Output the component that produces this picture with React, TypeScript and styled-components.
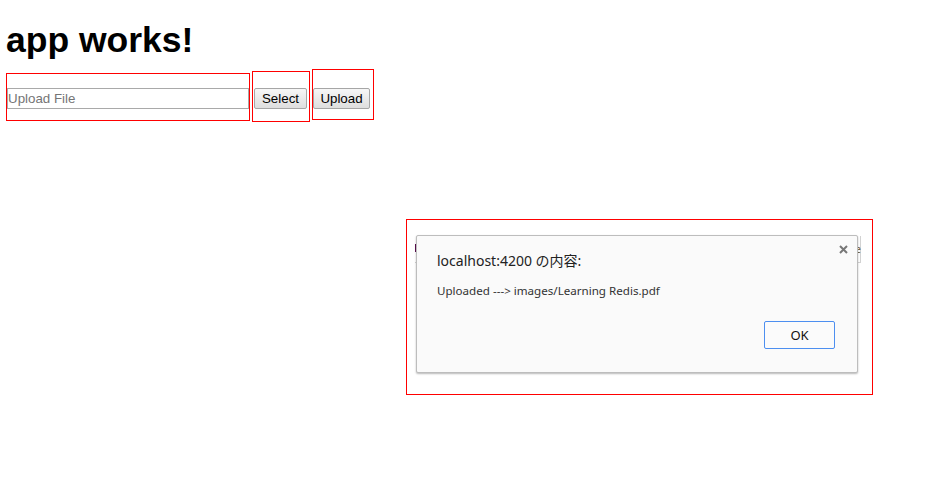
import React from "react";
import styled, { createGlobalStyle } from "styled-components";

const GlobalStyle = createGlobalStyle`
  html, body {
    margin: 0;
    padding: 0;
    background: #ffffff;
  }
  body {
    font-family: "Liberation Sans", Arial, sans-serif;
    color: #000;
  }
`;

const Page = styled.div`
  position: relative;
  width: 925px;
  height: 493px;
  padding-left: 6px;
  box-sizing: border-box;
  overflow: hidden;
`;

const Title = styled.h1`
  margin: 20px 0 9px 0;
  font-size: 35.5px;
  line-height: 40px;
  font-weight: bold;
`;

const Row = styled.div`
  display: flex;
  align-items: flex-start;
  gap: 2px;
`;

// the red debug outlines around each form control
const Frame = styled.div<{ $w: number; $h: number; $top: number; $padTop: number; $padLeft: number }>`
  box-sizing: border-box;
  width: ${(p) => p.$w}px;
  height: ${(p) => p.$h}px;
  margin-top: ${(p) => p.$top}px;
  padding-top: ${(p) => p.$padTop}px;
  padding-left: ${(p) => p.$padLeft}px;
  border: 1px solid #ff0000;
`;

const FileInput = styled.input`
  display: block;
  box-sizing: border-box;
  width: 242px;
  height: 21px;
  margin: 0;
  padding: 0 1px 0 0;
  border: 1px solid #a9a9a9;
  font-family: "Liberation Sans", Arial, sans-serif;
  font-size: 13.33px;
  color: #000;
  outline: none;

  &::placeholder {
    color: #757575;
  }
`;

const Button = styled.button<{ $w: number }>`
  display: block;
  box-sizing: border-box;
  width: ${(p) => p.$w}px;
  height: 21px;
  margin: 0;
  padding: 0;
  border: 1px solid #a6a6a6;
  border-radius: 2px;
  background: linear-gradient(#f7f7f7, #dedede);
  font-family: "Liberation Sans", Arial, sans-serif;
  font-size: 13.33px;
  line-height: 19px;
  color: #000;
`;

/* overlay: the browser alert, drawn over the page */
const AlertFrame = styled.div`
  position: absolute;
  left: 406px;
  top: 219px;
  width: 467px;
  height: 176px;
  box-sizing: border-box;
  border: 1px solid #ff0000;
  padding: 15px 0 0 9px;
`;

const Behind = styled.div`
  position: absolute;
  left: 8px;
  top: 16px;
  width: 446px;
  height: 27px;
  box-sizing: border-box;
  border-right: 1px solid #d2d2d2;
  border-bottom: 1px solid #d2d2d2;
  display: flex;
  justify-content: space-between;
  align-items: flex-start;
  padding-top: 8px;
`;

const Mark = styled.span`
  display: block;
  width: 2px;
  height: 8px;
  background: #5b0f4f;
`;

const Peek = styled.span`
  font-family: "Noto Sans", sans-serif;
  font-size: 10px;
  line-height: 10px;
  color: #6b5a3a;
  margin-right: -1px;
`;

const Dialog = styled.div`
  position: relative;
  box-sizing: border-box;
  width: 442px;
  height: 138px;
  background: #fafafa;
  border: 1px solid #bdbdbd;
  border-radius: 2px;
  box-shadow: 0 1px 2px rgba(0, 0, 0, 0.28);
  padding: 15px 22px 0 20px;
  font-family: "Noto Sans", "Noto Sans CJK JP", sans-serif;
  color: #222;
`;

const DialogTitle = styled.div`
  font-size: 14px;
  line-height: 20px;
`;

const DialogMessage = styled.div`
  margin-top: 12px;
  font-size: 11.6px;
  line-height: 16px;
  color: #333;
`;

const Footer = styled.div`
  display: flex;
  justify-content: flex-end;
  margin-top: 22px;
`;

const OkButton = styled.button`
  box-sizing: border-box;
  width: 71px;
  height: 28px;
  margin: 0;
  padding: 0;
  border: 1px solid #4d8ff0;
  border-radius: 2px;
  background: #fbfbfb;
  font-family: "Noto Sans", sans-serif;
  font-size: 13px;
  color: #111;
`;

const Close = styled.svg`
  position: absolute;
  right: 9px;
  top: 9px;
`;

export default function App() {
  return (
    <Page>
      <GlobalStyle />
      <Title>app works!</Title>
      <Row>
        <Frame $w={244} $h={48} $top={4} $padTop={14} $padLeft={0}>
          <FileInput type="text" placeholder="Upload File" />
        </Frame>
        <Frame $w={58} $h={51} $top={2} $padTop={16} $padLeft={1}>
          <Button $w={53}>Select</Button>
        </Frame>
        <Frame $w={62} $h={51} $top={0} $padTop={18} $padLeft={0}>
          <Button $w={57}>Upload</Button>
        </Frame>
      </Row>

      <AlertFrame>
        <Behind>
          <Mark />
          <Peek>e</Peek>
        </Behind>
        <Dialog>
          <Close width="9" height="9" viewBox="0 0 9 9">
            <path d="M1 1 L8 8 M8 1 L1 8" stroke="#777" strokeWidth="2" />
          </Close>
          <DialogTitle>localhost:4200 の内容:</DialogTitle>
          <DialogMessage>Uploaded ---&gt; images/Learning Redis.pdf</DialogMessage>
          <Footer>
            <OkButton>OK</OkButton>
          </Footer>
        </Dialog>
      </AlertFrame>
    </Page>
  );
}
